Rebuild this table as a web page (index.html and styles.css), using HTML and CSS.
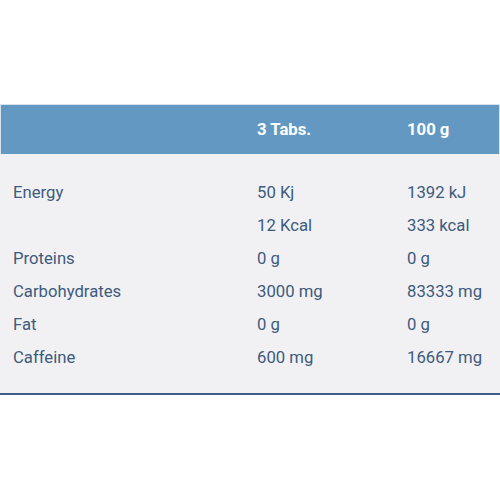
FILE: index.html
```html
<!DOCTYPE html>
<html>
<head>
<meta charset="utf-8">
<link rel="stylesheet" href="styles.css">
</head>
<body>
<div class="nutrition">
  <div class="head">
    <div class="cell label"></div>
    <div class="cell">3 Tabs.</div>
    <div class="cell">100 g</div>
  </div>
  <div class="body">
    <div class="cell label">Energy</div><div class="cell">50 Kj</div><div class="cell">1392 kJ</div>
    <div class="cell label"></div><div class="cell">12 Kcal</div><div class="cell">333 kcal</div>
    <div class="cell label">Proteins</div><div class="cell">0 g</div><div class="cell">0 g</div>
    <div class="cell label">Carbohydrates</div><div class="cell">3000 mg</div><div class="cell">83333 mg</div>
    <div class="cell label">Fat</div><div class="cell">0 g</div><div class="cell">0 g</div>
    <div class="cell label">Caffeine</div><div class="cell">600 mg</div><div class="cell">16667 mg</div>
  </div>
</div>
</body>
</html>
```
FILE: styles.css
```css
html, body {
  margin: 0;
  padding: 0;
  background: #ffffff;
}
body {
  font-family: Roboto, "Liberation Sans", sans-serif;
  font-size: 16.7px;
}
.nutrition {
  margin-top: 104px;
}
.head, .body {
  display: grid;
  grid-template-columns: 257px 150px 1fr;
}
.head {
  height: 50px;
  align-items: center;
  background: #6398c2;
  color: #ffffff;
  font-weight: bold;
  border: 1px solid #d9e3ee;
  border-bottom: none;
  box-sizing: border-box;
}
.body {
  background: #f1f1f4;
  color: #3e5a7c;
  padding: 22px 0 19px;
  grid-auto-rows: 33px;
  align-items: center;
  border-bottom: 2px solid #3f5f8a;
}
.label {
  padding-left: 13px;
}
.head .label {
  padding-left: 12px;
}
.head .cell:nth-child(2) {
  margin-left: -1px;
}
.head .cell:nth-child(3) {
  margin-left: -1px;
}
```
